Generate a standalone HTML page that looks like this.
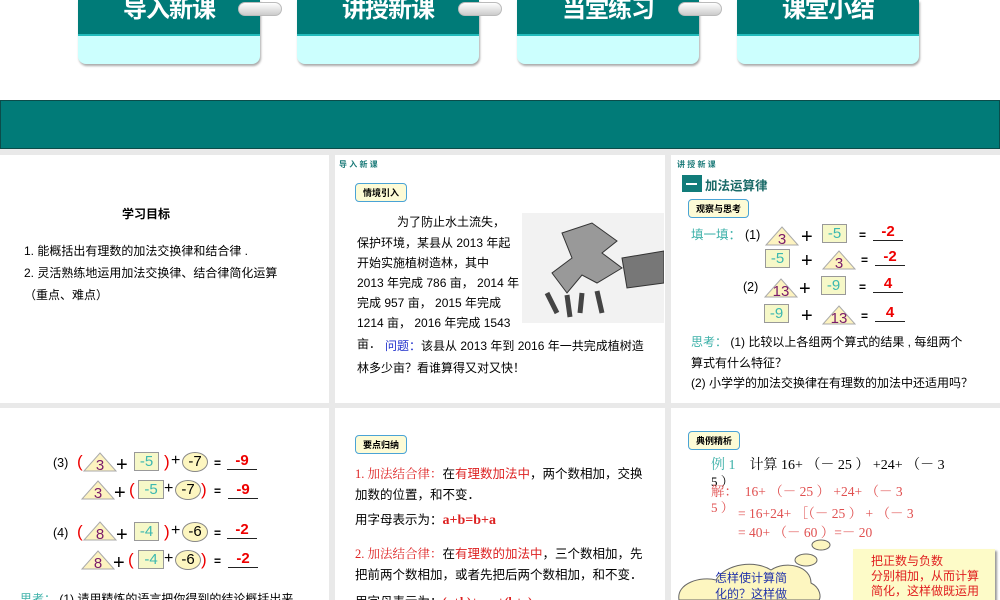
<!DOCTYPE html>
<html><head><meta charset="utf-8"><style>
*{margin:0;padding:0;box-sizing:border-box}
body{width:1000px;height:600px;overflow:hidden;background:#fff;font-family:"Liberation Sans","Noto Sans CJK SC",sans-serif;position:relative}
.a{position:absolute;white-space:nowrap}
.tab{position:absolute;top:0;width:182px;height:64px;border-radius:0 0 8px 8px;background:#ccfffe;box-shadow:1px 2px 2px #aaa;overflow:hidden}
.tab div{height:36px;background:#007b78;border-bottom:2px solid #2bb;color:#fff;font-weight:bold;font-size:24px;text-align:center;line-height:20px;letter-spacing:-1px}
.ring{position:absolute;top:2px;width:44px;height:14px;border-radius:7px;background:linear-gradient(#fff,#ccc);border:1px solid #bbb}
.gray{position:absolute;background:#e9e9e9}
.p{position:absolute;background:#fff;overflow:hidden}
.lbl{position:absolute;border:1px solid #4aa3d6;border-radius:4px;background:#fdfbd6;font-size:9px;font-weight:bold;padding:2px 7px;white-space:nowrap}
.sec{color:#1a7a78;font-size:8px;font-weight:bold}
.tri{position:absolute;width:34px;height:20px}
.bx{position:absolute;height:19px;width:22px;background:#f6f8c8;border:1px solid #999;color:#3cb8b0;font-size:15px;text-align:center;line-height:17px}
.el{position:absolute;height:20px;width:26px;border-radius:50%;background:#fdf6c0;border:1px solid #888;font-size:15px;text-align:center;line-height:18px}
.ans{position:absolute;width:30px;border-bottom:1.5px solid #222;color:#e00;font-size:15px;text-align:center;line-height:16px;font-weight:bold}
.op{position:absolute;font-size:20px;line-height:20px}
.rp{position:absolute;color:#e00;font-size:17px;line-height:20px}
.eq{position:absolute;font-size:12px;font-weight:bold;line-height:20px}
.t14{font-size:12.5px;line-height:20px}
.red{color:#d22}
.serif{font-family:"Liberation Serif","Noto Serif CJK SC",serif}
.l2{position:absolute;left:22px;font-size:12px;white-space:nowrap}
</style></head><body>

<div class="tab" style="left:78px"><div>导入新课</div></div>
<div class="tab" style="left:297px"><div>讲授新课</div></div>
<div class="tab" style="left:517px"><div>当堂练习</div></div>
<div class="tab" style="left:737px"><div>课堂小结</div></div>
<div class="ring" style="left:238px"></div>
<div class="ring" style="left:458px"></div>
<div class="ring" style="left:678px"></div>

<div class="a" style="left:0;top:100px;width:1000px;height:49px;background:#017b78;border:1px solid #0b4c4a"></div>
<div class="gray" style="left:0;top:149px;width:1000px;height:451px"></div>

<!-- panel 1 -->
<div class="p" style="left:0;top:155px;width:329px;height:248px">
 <div class="a" style="left:122px;top:50px;font-size:12px;font-weight:bold">学习目标</div>
 <div class="a" style="left:24px;top:87px;font-size:12px">1. 能概括出有理数的加法交换律和结合律 .</div>
 <div class="a" style="left:24px;top:109px;font-size:12px">2. 灵活熟练地运用加法交换律、结合律简化运算</div>
 <div class="a" style="left:24px;top:131px;font-size:12px">（重点、难点）</div>
</div>

<!-- panel 2 -->
<div class="p" style="left:335px;top:155px;width:330px;height:248px">
 <div class="a sec" style="left:4px;top:4px">导 入 新 课</div>
 <div class="lbl" style="left:20px;top:28px">情境引入</div>
 <div class="l2" style="left:62px;top:58px">为了防止水土流失，</div>
 <div class="l2" style="top:79px">保护环境，某县从 2013 年起</div>
 <div class="l2" style="top:99px">开始实施植树造林，其中</div>
 <div class="l2" style="top:119px">2013 年完成 786 亩， 2014 年</div>
 <div class="l2" style="top:139px">完成 957 亩， 2015 年完成</div>
 <div class="l2" style="top:159px">1214 亩， 2016 年完成 1543</div>
 <div class="l2" style="top:180px">亩．</div>
 <div class="a" style="left:50px;top:182px;font-size:12px"><span style="color:#2233cc">问题：</span>该县从 2013 年到 2016 年一共完成植树造</div>
 <div class="a" style="left:22px;top:204px;font-size:12px">林多少亩？看谁算得又对又快！</div>
 <svg class="a" style="left:187px;top:58px" width="142" height="110" viewBox="0 0 142 110">
  <rect width="142" height="110" fill="#f2f2f2"/>
  <path d="M40 20 L70 10 L95 28 L80 40 L100 55 L75 70 L60 62 L45 80 L30 60 L50 45 Z" fill="#999" stroke="#333"/>
  <path d="M100 45 L142 38 L142 70 L105 75 Z" fill="#777" stroke="#333"/>
  <path d="M25 80 L35 100 M45 82 L48 104 M60 80 L58 100 M75 78 L80 100" stroke="#444" stroke-width="5"/>
 </svg>
</div>

<!-- panel 3 -->
<div class="p" style="left:671px;top:155px;width:329px;height:248px">
 <div class="a sec" style="left:6px;top:4px">讲 授 新 课</div>
 <div class="a" style="left:11px;top:20px;width:20px;height:17px;background:#117c7a"></div>
 <div class="a" style="left:15px;top:28px;width:11px;height:2px;background:#fff"></div>
 <div class="a" style="left:34px;top:20px;font-size:12.5px;font-weight:bold;color:#1a6a68">加法运算律</div>
 <div class="lbl" style="left:17px;top:44px">观察与思考</div>
 <div class="a t14" style="left:20px;top:70px;color:#3bb0a8">填一填：</div>
 <div class="a t14" style="left:74px;top:70px">(1)</div>
 <svg class="tri" style="left:94px;top:71px" viewBox="0 0 34 20"><path d="M17 1 L33 19 L1 19Z" fill="#fdf3c0" stroke="#aaa"/><text x="17" y="18" font-size="15" text-anchor="middle" fill="#7a1a6a" font-family="Liberation Sans">3</text></svg>
 <div class="op" style="left:130px;top:72px">+</div>
 <div class="bx" style="left:151px;top:69px;width:25px">-5</div>
 <div class="eq" style="left:188px;top:70px">=</div>
 <div class="ans" style="left:202px;top:69px">-2</div>
 <div class="bx" style="left:94px;top:94px;width:25px">-5</div>
 <div class="op" style="left:130px;top:96px">+</div>
 <svg class="tri" style="left:151px;top:95px" viewBox="0 0 34 20"><path d="M17 1 L33 19 L1 19Z" fill="#fdf3c0" stroke="#aaa"/><text x="17" y="18" font-size="15" text-anchor="middle" fill="#7a1a6a" font-family="Liberation Sans">3</text></svg>
 <div class="eq" style="left:190px;top:95px">=</div>
 <div class="ans" style="left:204px;top:94px">-2</div>
 <div class="a t14" style="left:72px;top:122px">(2)</div>
 <svg class="tri" style="left:93px;top:123px" viewBox="0 0 34 20"><path d="M17 1 L33 19 L1 19Z" fill="#fdf3c0" stroke="#aaa"/><text x="17" y="18" font-size="15" text-anchor="middle" fill="#7a1a6a" font-family="Liberation Sans">13</text></svg>
 <div class="op" style="left:128px;top:124px">+</div>
 <div class="bx" style="left:150px;top:121px;width:25px">-9</div>
 <div class="eq" style="left:188px;top:122px">=</div>
 <div class="ans" style="left:202px;top:121px">4</div>
 <div class="bx" style="left:93px;top:149px;width:25px">-9</div>
 <div class="op" style="left:130px;top:151px">+</div>
 <svg class="tri" style="left:151px;top:150px" viewBox="0 0 34 20"><path d="M17 1 L33 19 L1 19Z" fill="#fdf3c0" stroke="#aaa"/><text x="17" y="18" font-size="15" text-anchor="middle" fill="#7a1a6a" font-family="Liberation Sans">13</text></svg>
 <div class="eq" style="left:190px;top:151px">=</div>
 <div class="ans" style="left:204px;top:150px">4</div>
 <div class="a" style="left:20px;top:178px;font-size:12px"><span style="color:#3bb0a8">思考：</span> (1) 比较以上各组两个算式的结果 , 每组两个</div>
 <div class="a" style="left:20px;top:199px;font-size:12px">算式有什么特征？</div>
 <div class="a" style="left:20px;top:219px;font-size:12px">(2) 小学学的加法交换律在有理数的加法中还适用吗？</div>
</div>

<!-- panel 4 -->
<div class="p" style="left:0;top:408px;width:329px;height:192px">
 <div class="a t14" style="left:53px;top:45px">(3)</div>
 <div class="rp" style="left:77px;top:44px">(</div>
 <svg class="tri" style="left:83px;top:44px" viewBox="0 0 34 20"><path d="M17 1 L33 19 L1 19Z" fill="#fdf3c0" stroke="#aaa"/><text x="17" y="18" font-size="15" text-anchor="middle" fill="#7a1a6a" font-family="Liberation Sans">3</text></svg>
 <div class="op" style="left:116px;top:47px">+</div>
 <div class="bx" style="left:134px;top:44px;width:25px">-5</div>
 <div class="rp" style="left:164px;top:44px">)</div>
 <div class="op" style="left:171px;top:43px;font-size:16px">+</div>
 <div class="el" style="left:182px;top:44px">-7</div>
 <div class="eq" style="left:214px;top:45px">=</div>
 <div class="ans" style="left:227px;top:45px">-9</div>
 <svg class="tri" style="left:81px;top:72px" viewBox="0 0 34 20"><path d="M17 1 L33 19 L1 19Z" fill="#fdf3c0" stroke="#aaa"/><text x="17" y="18" font-size="15" text-anchor="middle" fill="#7a1a6a" font-family="Liberation Sans">3</text></svg>
 <div class="op" style="left:114px;top:75px">+</div>
 <div class="rp" style="left:129px;top:72px">(</div>
 <div class="bx" style="left:138px;top:72px;width:26px">-5</div>
 <div class="op" style="left:164px;top:71px;font-size:16px">+</div>
 <div class="el" style="left:175px;top:72px">-7</div>
 <div class="rp" style="left:201px;top:72px">)</div>
 <div class="eq" style="left:214px;top:73px">=</div>
 <div class="ans" style="left:228px;top:74px">-9</div>
 <div class="a t14" style="left:53px;top:115px">(4)</div>
 <div class="rp" style="left:77px;top:114px">(</div>
 <svg class="tri" style="left:83px;top:113px" viewBox="0 0 34 20"><path d="M17 1 L33 19 L1 19Z" fill="#fdf3c0" stroke="#aaa"/><text x="17" y="18" font-size="15" text-anchor="middle" fill="#7a1a6a" font-family="Liberation Sans">8</text></svg>
 <div class="op" style="left:116px;top:117px">+</div>
 <div class="bx" style="left:134px;top:114px;width:25px">-4</div>
 <div class="rp" style="left:164px;top:114px">)</div>
 <div class="op" style="left:171px;top:113px;font-size:16px">+</div>
 <div class="el" style="left:182px;top:114px">-6</div>
 <div class="eq" style="left:214px;top:115px">=</div>
 <div class="ans" style="left:227px;top:114px">-2</div>
 <svg class="tri" style="left:81px;top:142px" viewBox="0 0 34 20"><path d="M17 1 L33 19 L1 19Z" fill="#fdf3c0" stroke="#aaa"/><text x="17" y="18" font-size="15" text-anchor="middle" fill="#7a1a6a" font-family="Liberation Sans">8</text></svg>
 <div class="op" style="left:113px;top:145px">+</div>
 <div class="rp" style="left:128px;top:142px">(</div>
 <div class="bx" style="left:138px;top:142px;width:26px">-4</div>
 <div class="op" style="left:164px;top:141px;font-size:16px">+</div>
 <div class="el" style="left:175px;top:142px">-6</div>
 <div class="rp" style="left:201px;top:142px">)</div>
 <div class="eq" style="left:214px;top:143px">=</div>
 <div class="ans" style="left:228px;top:143px">-2</div>
 <div class="a" style="left:20px;top:182px;font-size:12px"><span style="color:#3bb0a8">思考：</span> (1) 请用精炼的语言把你得到的结论概括出来</div>
</div>

<!-- panel 5 -->
<div class="p" style="left:335px;top:408px;width:330px;height:192px">
 <div class="lbl" style="left:20px;top:27px">要点归纳</div>
 <div class="a" style="left:20px;top:55px;font-size:12.5px"><span class="red serif">1. 加法结合律：</span>在<span class="red">有理数加法中</span>，两个数相加，交换</div>
 <div class="a" style="left:20px;top:76px;font-size:12.5px">加数的位置，和不变．</div>
 <div class="a" style="left:20px;top:101px;font-size:12.5px">用字母表示为：<b class="red serif" style="font-size:14px">a+b=b+a</b></div>
 <div class="a" style="left:20px;top:135px;font-size:12.5px"><span class="red serif">2. 加法结合律：</span>在<span class="red">有理数的加法中</span>，三个数相加，先</div>
 <div class="a" style="left:20px;top:156px;font-size:12.5px">把前两个数相加，或者先把后两个数相加，和不变．</div>
 <div class="a" style="left:20px;top:183px;font-size:12.5px">用字母表示为：<b class="red serif">(a+b)+c=a+(b+c)</b></div>
</div>

<!-- panel 6 -->
<div class="p" style="left:671px;top:408px;width:329px;height:192px">
 <div class="lbl" style="left:17px;top:23px">典例精析</div>
 <div class="a serif" style="left:40px;top:46px;font-size:14px"><span style="color:#3bb0a8">例 1</span>　计算 16+ （－ 25 ） +24+ （－ 3</div>
 <div class="a serif" style="left:40px;top:63px;font-size:13px">5 ）</div>
 <div class="a serif" style="left:40px;top:72px;font-size:13.5px;color:#e05050">解：　16+ （－ 25 ） +24+ （－ 3</div>
 <div class="a serif" style="left:40px;top:89px;font-size:13px;color:#e05050">5 ）</div>
 <div class="a serif" style="left:67px;top:94px;font-size:13.5px;color:#e05050">= 16+24+ ［（－ 25 ） + （－ 3</div>
 <div class="a serif" style="left:67px;top:113px;font-size:13.5px;color:#e05050">= 40+ （－ 60 ）=－ 20</div>
 <svg class="a" style="left:0;top:130px" width="180" height="62" viewBox="0 0 180 62">
  <ellipse cx="150" cy="7" rx="9" ry="5" fill="#fdf6c0" stroke="#666"/>
  <ellipse cx="135" cy="22" rx="11" ry="6" fill="#fdf6c0" stroke="#666"/>
  <path d="M8 62 C5 45 30 38 45 42 C55 25 85 22 100 32 C115 22 140 28 140 45 C150 50 150 60 148 62 Z" fill="#fdf6c0" stroke="#666"/>
 </svg>
 <div class="a" style="left:44px;top:162px;font-size:12px;color:#2233aa;line-height:16px">怎样使计算简<br>化的？这样做</div>
 <div class="a" style="left:182px;top:141px;width:142px;height:51px;background:#fdfbc8;box-shadow:2px 2px 2px #999"></div>
 <div class="a" style="left:200px;top:146px;font-size:12px;color:#e02020;line-height:15px">把正数与负数<br>分别相加，从而计算<br>简化，这样做既运用</div>
</div>
</body></html>
